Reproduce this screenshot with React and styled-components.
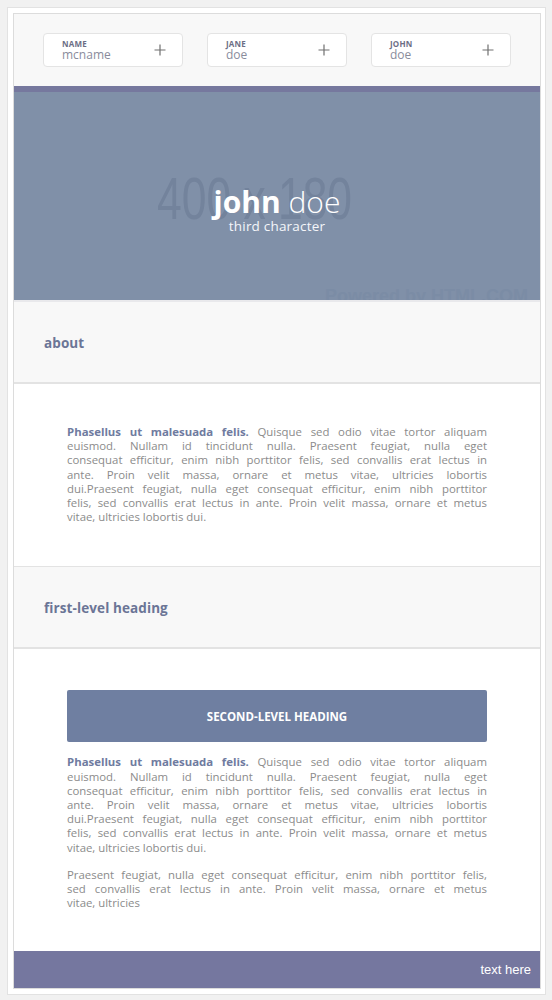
import React from 'react';
import styled, { createGlobalStyle } from 'styled-components';

const Global = createGlobalStyle`
  html, body { margin: 0; padding: 0; background: #f1f1f1; }
  body { padding: 7px 6px 7px 7px; font-family: "Open Sans", "Noto Sans", sans-serif; }
  * { box-sizing: border-box; }
`;

const Frame = styled.div`
  background: #ffffff;
  border: 1px solid #e2e2e2;
  padding: 5px 4px 5px 5px;
`;

const Inner = styled.div`
  border: 1px solid #dcdcdc;
  background: #ffffff;
`;

const Toolbar = styled.div`
  background: #f8f8f8;
  padding: 19px 0;
  display: flex;
  justify-content: center;
  gap: 24px;
`;

const NameButton = styled.button`
  width: 140px;
  height: 34px;
  background: #ffffff;
  border: 1px solid #e4e4e4;
  border-radius: 4px;
  display: flex;
  align-items: center;
  justify-content: space-between;
  padding: 0 16px 0 18px;
  cursor: pointer;
  font-family: inherit;
`;

const NameText = styled.span`
  display: flex;
  flex-direction: column;
  align-items: flex-start;
  text-align: left;
`;

const NameLabel = styled.span`
  font-size: 8px;
  line-height: 9px;
  font-weight: 700;
  color: #6c6e85;
  letter-spacing: 0.2px;
  text-transform: uppercase;
`;

const NameValue = styled.span`
  font-size: 12px;
  line-height: 13px;
  color: #8a8c9c;
`;

const Hero = styled.div`
  position: relative;
  overflow: hidden;
  height: 216px;
  border-top: 6px solid #76789e;
  border-bottom: 2px solid #e9e9ec;
  background: #8090a8;
  display: flex;
  flex-direction: column;
  align-items: center;
  justify-content: center;
  padding-top: 28px;
`;

const PlaceholderSize = styled.span`
  position: absolute;
  left: 143px;
  top: 77px;
  font-family: "Liberation Sans", Arial, sans-serif;
  font-size: 60px;
  line-height: 1;
  color: #73839c;
  transform: scaleX(0.74);
  transform-origin: left top;
  white-space: nowrap;
`;

const PlaceholderCredit = styled.span`
  position: absolute;
  right: 12px;
  bottom: -5px;
  font-family: "Liberation Sans", Arial, sans-serif;
  font-size: 18px;
  font-weight: 700;
  line-height: 1;
  color: #7b8ca5;
  white-space: nowrap;
`;

const HeroTitle = styled.h1`
  position: relative;
  margin: 0;
  font-size: 30px;
  line-height: 32px;
  color: #ffffff;
  font-weight: 300;
`;

const HeroBold = styled.span`
  font-weight: 700;
`;

const HeroSub = styled.div`
  position: relative;
  font-size: 13.5px;
  line-height: 16px;
  color: #f4f6fa;
  letter-spacing: 0.2px;
`;

const Section = styled.section`
  border-bottom: ${(p) => (p.$last ? 'none' : '1px solid #e3e3e3')};
`;

const SectionHeader = styled.h2`
  margin: 0;
  height: 82px;
  padding: 2px 30px 0;
  display: flex;
  align-items: center;
  background: #f8f8f8;
  border-bottom: 2px solid #e3e3e3;
  font-size: 13.5px;
  font-weight: 700;
  color: #6b7596;
  letter-spacing: 0.1px;
`;

const SectionBody = styled.div`
  background: #ffffff;
  padding: 41px 53px ${(p) => p.$bottom || 41}px;
`;

const SubHeading = styled.h3`
  margin: 0 0 13px;
  height: 52px;
  background: #6f7fa1;
  border-radius: 2px;
  color: #ffffff;
  font-size: 11.5px;
  font-weight: 700;
  text-transform: uppercase;
  display: flex;
  align-items: center;
  justify-content: center;
`;

const Para = styled.p`
  margin: 0 0 ${(p) => p.$gap || 0}px;
  text-align: justify;
  font-size: 11.4px;
  line-height: 14.2px;
  color: #8b8b8b;
`;

const Line = styled.span`
  display: block;
  text-align-last: ${(p) => (p.$last ? 'left' : 'justify')};
`;

const Lead = styled.strong`
  font-weight: 700;
  color: #6f7ba0;
`;

const Footer = styled.footer`
  height: 37px;
  background: #75779f;
  display: flex;
  align-items: center;
  justify-content: flex-end;
  padding-right: 9px;
  font-family: "Liberation Sans", Arial, sans-serif;
  font-size: 13px;
  color: #ffffff;
`;

const Plus = () => (
  <svg width="12" height="12" viewBox="0 0 12 12" aria-hidden="true">
    <path d="M6 0.5V11.5M0.5 6H11.5" stroke="#707070" strokeWidth="1.2" fill="none" />
  </svg>
);

const LOREM_LINES = [
  'euismod. Nullam id tincidunt nulla. Praesent feugiat, nulla eget',
  'consequat efficitur, enim nibh porttitor felis, sed convallis erat lectus in',
  'ante. Proin velit massa, ornare et metus vitae, ultricies lobortis',
  'dui.Praesent feugiat, nulla eget consequat efficitur, enim nibh porttitor',
  'felis, sed convallis erat lectus in ante. Proin velit massa, ornare et metus',
  'vitae, ultricies lobortis dui.',
];

const LOREM2_LINES = [
  'Praesent feugiat, nulla eget consequat efficitur, enim nibh porttitor felis,',
  'sed convallis erat lectus in ante. Proin velit massa, ornare et metus',
  'vitae, ultricies',
];

const LeadParagraph = ({ gap }) => (
  <Para $gap={gap}>
    <Line>
      <Lead>Phasellus ut malesuada felis.</Lead> Quisque sed odio vitae tortor aliquam
    </Line>
    {LOREM_LINES.map((l, i) => (
      <Line key={i} $last={i === LOREM_LINES.length - 1}>
        {l}
      </Line>
    ))}
  </Para>
);

const people = [
  { label: 'name', value: 'mcname' },
  { label: 'jane', value: 'doe' },
  { label: 'john', value: 'doe' },
];

export default function App() {
  return (
    <>
      <Global />
      <Frame>
        <Inner>
          <Toolbar>
            {people.map((p) => (
              <NameButton key={p.label}>
                <NameText>
                  <NameLabel>{p.label}</NameLabel>
                  <NameValue>{p.value}</NameValue>
                </NameText>
                <Plus />
              </NameButton>
            ))}
          </Toolbar>
          <Hero>
            <PlaceholderSize>400 x 180</PlaceholderSize>
            <PlaceholderCredit>Powered by HTML.COM</PlaceholderCredit>
            <HeroTitle>
              <HeroBold>john</HeroBold> doe
            </HeroTitle>
            <HeroSub>third character</HeroSub>
          </Hero>
          <Section>
            <SectionHeader>about</SectionHeader>
            <SectionBody $bottom={42}>
              <LeadParagraph />
            </SectionBody>
          </Section>
          <Section $last>
            <SectionHeader>first-level heading</SectionHeader>
            <SectionBody $bottom={41}>
              <SubHeading>second-level heading</SubHeading>
              <LeadParagraph gap={13} />
              <Para>
                {LOREM2_LINES.map((l, i) => (
                  <Line key={i} $last={i === LOREM2_LINES.length - 1}>
                    {l}
                  </Line>
                ))}
              </Para>
            </SectionBody>
          </Section>
          <Footer>text here</Footer>
        </Inner>
      </Frame>
    </>
  );
}
